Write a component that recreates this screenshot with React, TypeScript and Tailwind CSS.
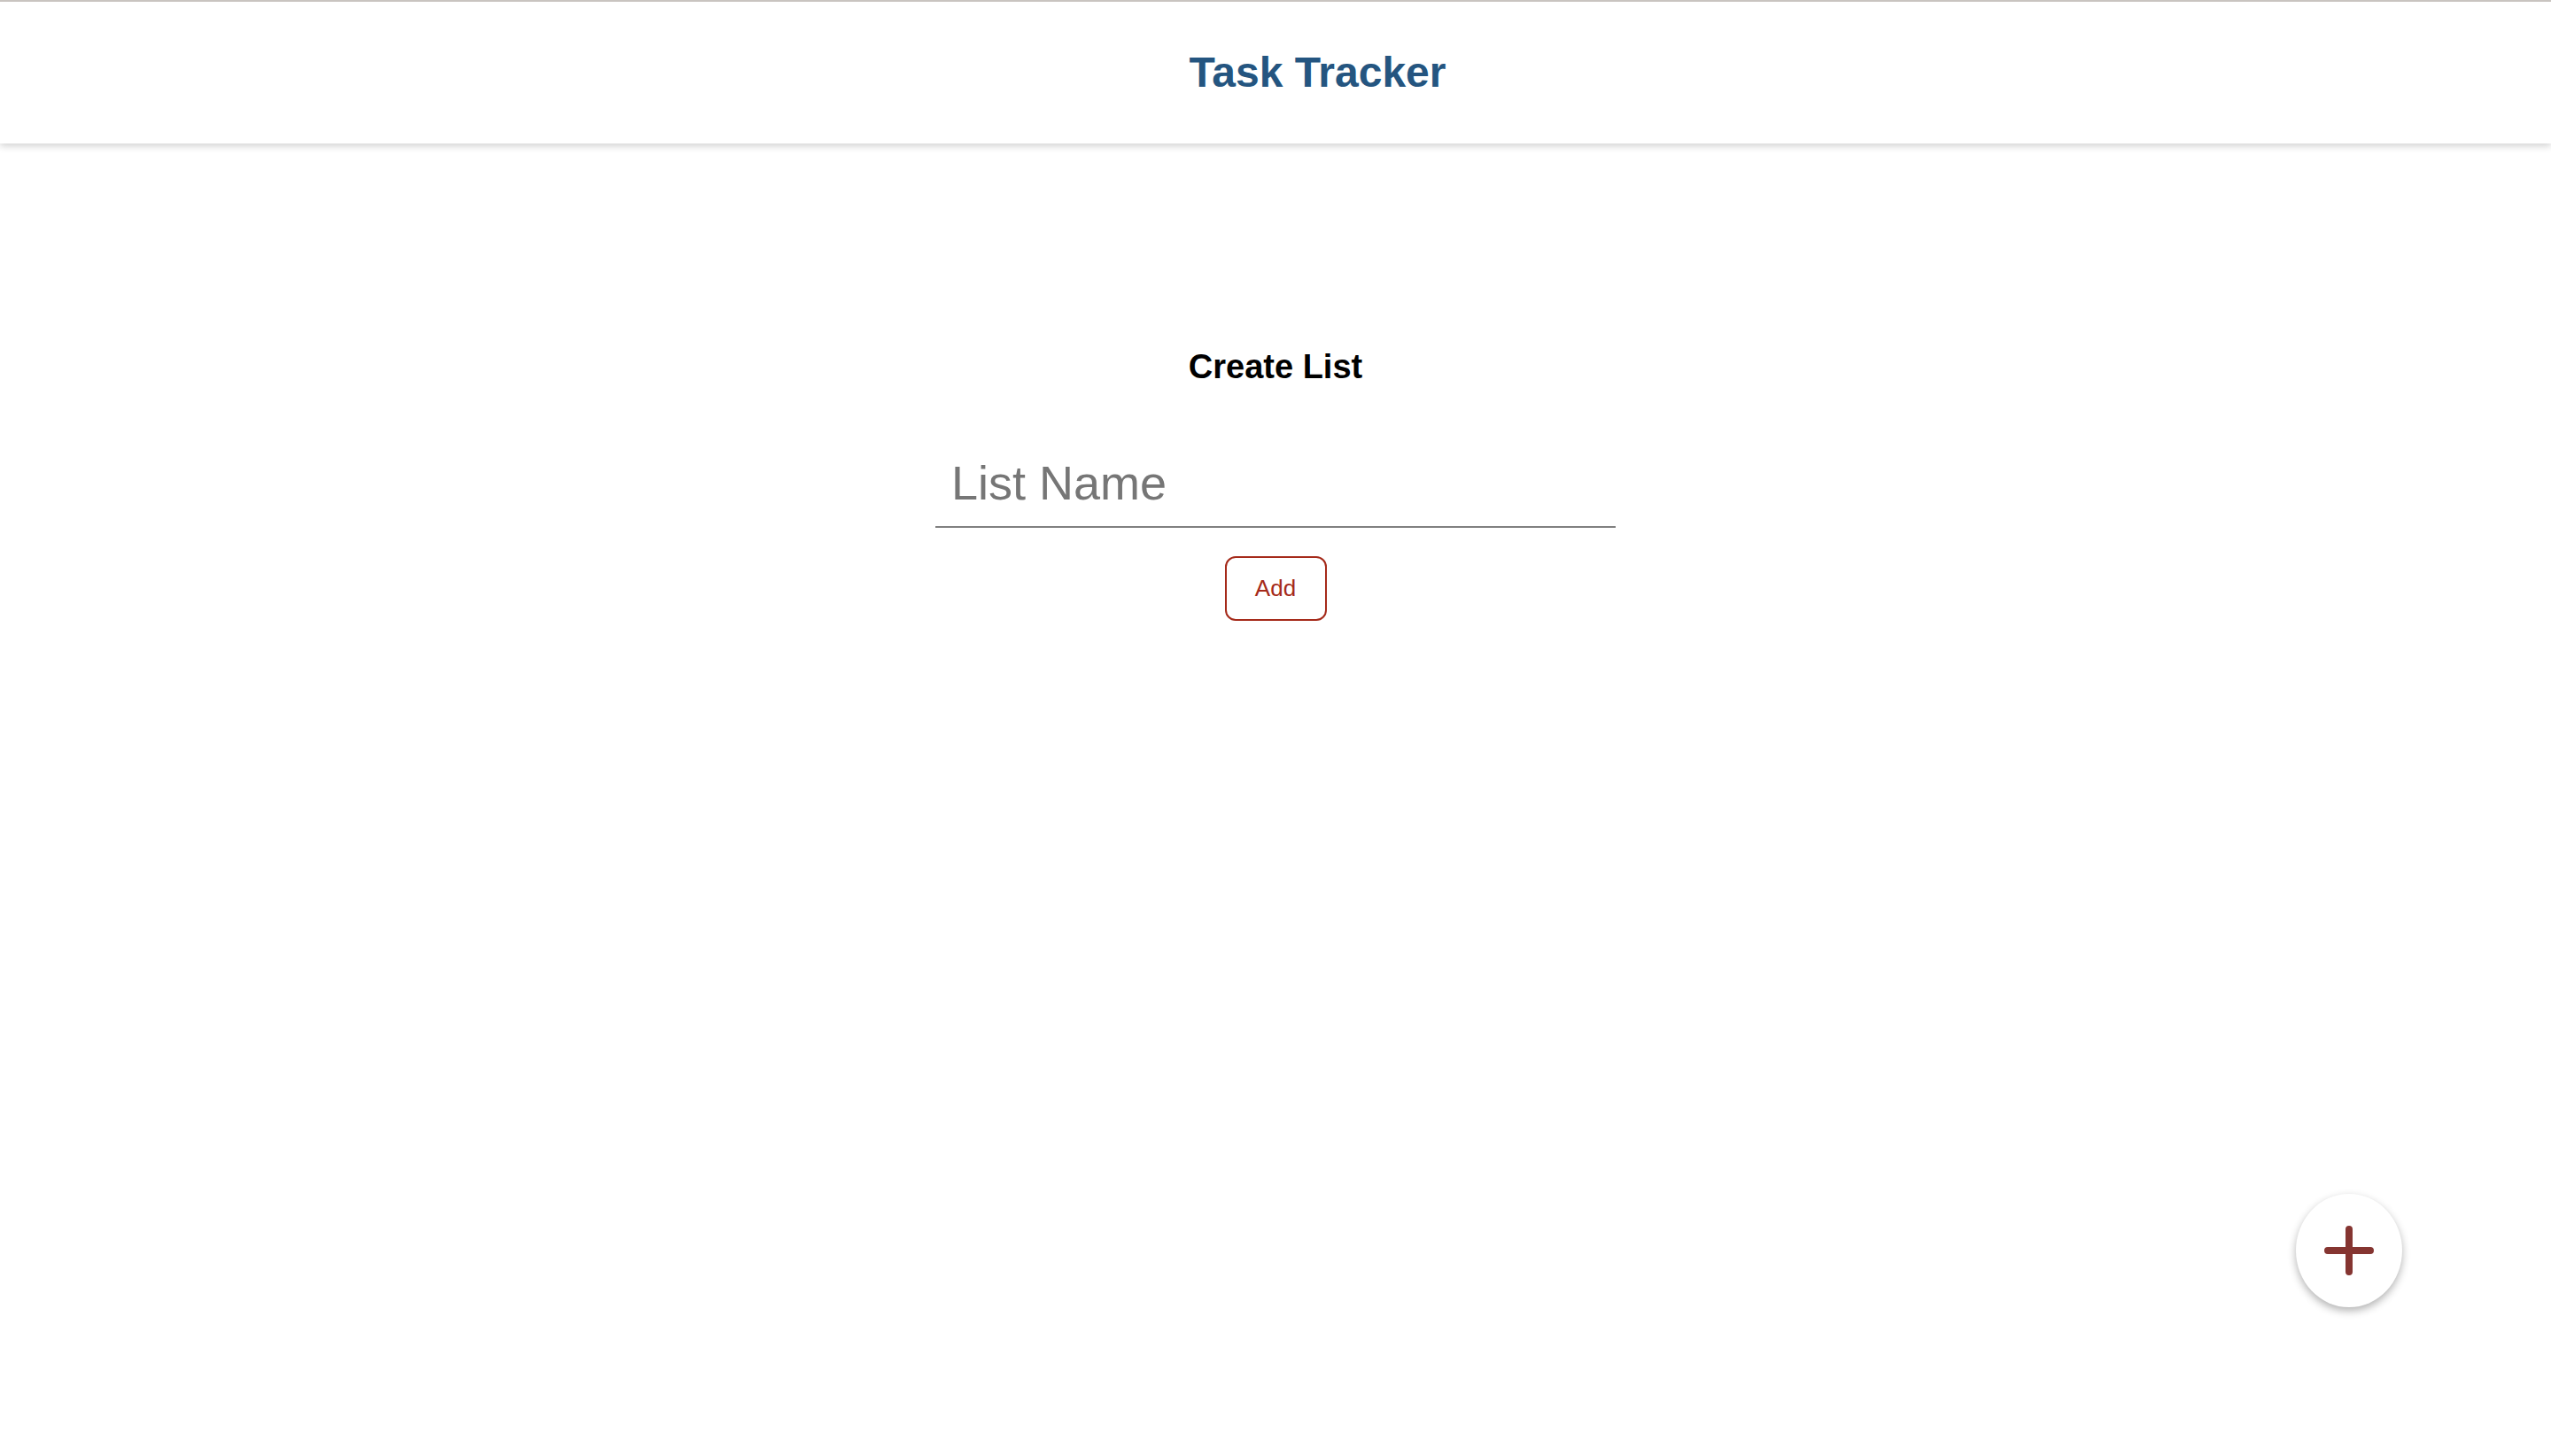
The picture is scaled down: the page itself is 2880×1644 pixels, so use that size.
import React from "react";

const PlusIcon = () => {
  return (
    <svg width="56" height="56" viewBox="0 0 56 56" fill="none">
      <path
        d="M28 4V52M4 28H52"
        stroke="#853531"
        strokeWidth="8"
        strokeLinecap="round"
      />
    </svg>
  );
};

const App = () => {
  return (
    <div className="min-h-screen bg-white font-['Liberation_Sans',Arial,sans-serif]">
      <header className="h-[162px] border-t-2 border-[#c9c4c0] bg-white shadow-[0_3px_8px_rgba(0,0,0,0.18)] flex items-center justify-center">
        <h1 className="pl-[95px] text-[48px] font-bold leading-none text-[#245580]">
          Task Tracker
        </h1>
      </header>

      <main className="flex flex-col items-center pt-[233px]">
        <h2 className="text-[38px] font-bold leading-none text-black">Create List</h2>
        <input
          type="text"
          placeholder="List Name"
          className="mt-[81px] w-[768px] border-b-2 border-[#808080] pl-[18px] pb-[18px] text-[54px] leading-none text-[#333] placeholder:text-[#767676] outline-none"
        />
        <button className="mt-[32px] w-[115px] h-[73px] rounded-[12px] border-2 border-[#a52a1a] text-[26px] text-[#a52a1a] bg-white">
          Add
        </button>
      </main>

      <button className="fixed right-[168px] bottom-[168px] w-[120px] h-[128px] rounded-[50%] bg-white shadow-[0_4px_10px_rgba(0,0,0,0.3)] flex items-center justify-center">
        <PlusIcon />
      </button>
    </div>
  );
};

export default App;
